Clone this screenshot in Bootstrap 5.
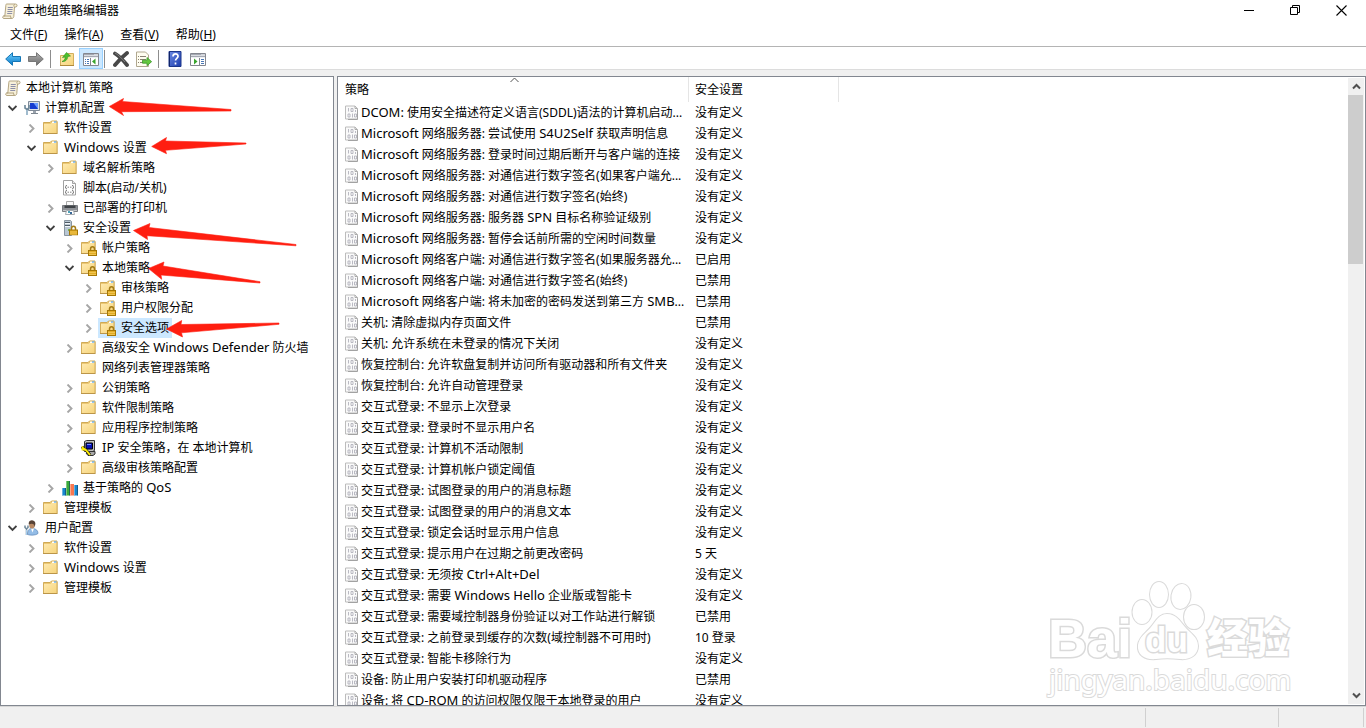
<!DOCTYPE html>
<html lang="zh-CN">
<head>
<meta charset="utf-8">
<meta name="viewport" content="width=device-width, initial-scale=1">
<title>本地组策略编辑器</title>
<link href="https://cdn.jsdelivr.net/npm/bootstrap@5.3.0/dist/css/bootstrap.min.css" rel="stylesheet">
<style>
  body { font: 12px/20px "Noto Sans", "Noto Sans CJK SC", sans-serif; color: #000; background: #f0f0f0; }
  button { font: inherit; color: inherit; border: 0; padding: 0; background: transparent; }
  a { color: inherit; text-decoration: none; }
  svg { display: block; flex: none; }
  .ico { width: 16px; height: 16px; }
  .en { font-size: 13px; line-height: 1; }
  .titlebar { height: 22px; padding-left: 2px; }
  .titlebar h1 { font-size: 12px; line-height: 22px; font-weight: 400; margin: 0 0 0 5px; }
  .wbtns { padding-right: 2px; }
  .wbtn { width: 46px; height: 20px; display: flex; align-items: center; justify-content: center; }
  .menubar { height: 24px; padding-left: 2px; }
  .menubar button { padding: 0 9px 0 8px; line-height: 26px; }
  .tools { height: 24px; padding-left: 1px; border-top: 1px solid #b4b4b4; border-bottom: 1px solid #dcdcdc; }
  .tool { width: 23px; height: 21px; display: flex; align-items: center; justify-content: center; }
  .tool.on { background: #cce8ff; border: 1px solid #99d1ff; width: 24px; margin: 0 -2px 0 1px; }
  .vsep { width: 1px; height: 18px; background: #8d8d8d; margin: 0 4px 1px 3px; }
  .panes { padding-top: 6px; gap: 3px; }
  .pane { border: 1px solid #828790; background: #fff; }
  .tree-pane { flex: 0 0 334px; padding: 1px 2px; }
  .tree-pane ul { list-style: none; margin: 0; padding: 0; }
  .tree-pane ul ul ul { padding-left: 19px; }
  .node { height: 20px; display: flex; align-items: center; white-space: nowrap; }
  .twist { width: 19px; height: 20px; display: flex; align-items: center; justify-content: center; flex: none; }
  .entry { height: 20px; display: flex; align-items: center; gap: 5px; padding: 0 3px 0 2px; }
  .picked { background: #cce8ff; }
  .marks { left: 0; top: 0; pointer-events: none; }
  .policies { table-layout: fixed; width: 501px; border-collapse: separate; border-spacing: 0; }
  .policies th { font-weight: 400; height: 25px; padding: 0 6px 0 7px; border-right: 1px solid #e5e5e5; position: relative; }
  .policies td { height: 21px; padding: 0 6px; line-height: 20px; white-space: nowrap; }
  .policies td:first-child { padding-left: 7px; }
  .policies th + th { padding-left: 6px; }
  .policies .ico { width: 14px; height: 16px; }
  .rowhead { display: flex; align-items: center; gap: 2px; height: 21px; }
  .sorted { position: absolute; left: 50%; top: 0; margin-left: -3px; }
  .vbar { width: 16px; margin: 1px 1px 1px 0; background: #f0f0f0; }
  .vbar button { height: 17px; display: flex; align-items: center; justify-content: center; }
  .thumb { height: 28.500%; width: 15px; background: #cdcdcd; }
  .status { height: 22px; border-top: 1px solid #d7d7d7; padding: 1px 2px 1px 0; }
  .status div { border-right: 1px solid #d0d0d0; }
  .stamp { right: 54px; bottom: 4px; pointer-events: none; }
</style>
</head>
<body class="vh-100 d-flex flex-column overflow-hidden">

<svg width="0" height="0" class="position-absolute" aria-hidden="true">
  <defs>
    <linearGradient id="gold" x1="0" y1="0" x2="1" y2="1"><stop offset="0" stop-color="#ffeab0"/><stop offset="1" stop-color="#f6d47c"/></linearGradient>
    <linearGradient id="sky" x1="0" y1="0" x2="0" y2="1"><stop offset="0" stop-color="#6fd0ff"/><stop offset="1" stop-color="#0878c8"/></linearGradient>
    <linearGradient id="iron" x1="0" y1="0" x2="0" y2="1"><stop offset="0" stop-color="#b0b0b0"/><stop offset="1" stop-color="#6c6c6c"/></linearGradient>
    <linearGradient id="navy" x1="0" y1="0" x2="1" y2="1"><stop offset="0" stop-color="#6d8ce6"/><stop offset="1" stop-color="#1c3cab"/></linearGradient>
  </defs>
  <symbol id="scroll" viewBox="0 0 16 16">
    <path d="M4.500 1h9c2 0 2 2.500.5 3h-1.500L11.800 13.500c-.2 1.300-1 2-2 2H2c-1.500 0-1.800-2-.5-2.500h1.300l1-10c0-1 .2-2 .7-2z" fill="#f7f0da" stroke="#ab9c76" stroke-width=".9"/>
    <path d="M12.500 4c-1-.4-1-2 .3-2.700M9.800 15.200C8 15 8.500 13 9 13H1.500" fill="none" stroke="#ab9c76" stroke-width=".9"/>
    <path d="M5.800 4.500h5M5.600 6.500h5M5.400 8.500h5M5.200 10.500h5" stroke="#8d8fa8"/>
  </symbol>
  <symbol id="folder" viewBox="0 0 16 16">
    <path d="M.5 13V2.500h6.500L8.500 1h5.500v12z" fill="#ecc873" stroke="#cfa955"/>
    <path d="M9 1.500h4.500v2H9z" fill="#fff"/><path d="M11 1.500h2.500v1H11z" fill="#2d8fe8"/>
    <path d="M1 4h6.500l1-1H14v10H1z" fill="url(#gold)"/>
    <path d="M.5 3v10.500M14 2v11.500" stroke="#d3ae5c"/><path d="M0 13.500h14.500" stroke="#bb9548"/>
  </symbol>
  <symbol id="padlock" viewBox="0 0 16 16">
    <path d="M9.500 10.500V9c0-3 4-3 4 0v1.500" fill="none" stroke="#a47c18" stroke-width="1.500"/>
    <rect x="7.500" y="10.500" width="8" height="5" fill="#e3ad26" stroke="#a67805"/>
    <path d="M8 12.500h7M8 14.500h7" stroke="#f9d56e" stroke-width=".6"/>
  </symbol>
  <symbol id="locked" viewBox="0 0 16 16"><use href="#folder" width="16" height="16"/><use href="#padlock" width="16" height="16"/></symbol>
  <symbol id="server" viewBox="0 0 16 16">
    <path d="M2.500.5h6l1 1v14h-7z" fill="#b9c7d3" stroke="#8995a0"/><path d="M3 2.500h5M3 5.500h5" stroke="#4c5963"/><path d="M3 3.500h5M3 6.500h5" stroke="#f3f7fa"/><path d="M6 9h2v2H6z" fill="#73b65c"/>
    <use href="#padlock" y="-.5" width="16" height="16"/>
  </symbol>
  <symbol id="pc" viewBox="0 0 16 16">
    <path d="M4.500 1.500h11v9h-11z" fill="#dce1e8" stroke="#808b98"/><path d="M6 3h8v6H6z" fill="#153bd0"/><path d="M9.500 3H14v6z" fill="#6a9cff"/>
    <path d="M9 11h3v2H9z" fill="#9aa3ad"/><path d="M7 13.500h7" stroke="#7d8790"/>
    <path d="M1 5v3l2 1.500L5 8V5M3 9v6" fill="none" stroke="#6d8799" stroke-width="1.600"/><path d="M3 10v5" stroke="#b7d9ef"/>
  </symbol>
  <symbol id="user" viewBox="0 0 16 16">
    <path d="M3.500 14.500c0-5 2-6 4.500-6s6 1 6 5c-2 2-8 2-10.500 1z" fill="#93bce6" stroke="#5c87b8" stroke-width=".7"/>
    <path d="M7 8.500l1.500 4 1.500-4z" fill="#fff"/><ellipse cx="8" cy="5" rx="2.800" ry="3.500" fill="#b98963"/>
    <path d="M4.800 4.500C4 .5 8-.5 10 1s1.500 4 .5 6c0-3-2-4-5.700-2.500z" fill="#584336"/>
    <path d="M1 5.500v2l1.500 1.500L4 7.500v-2M2.500 9v6" fill="none" stroke="#70899a" stroke-width="1.500"/><path d="M2.500 10v5" stroke="#a7cdec"/>
  </symbol>
  <symbol id="script" viewBox="0 0 16 16">
    <path d="M1.500.5h9l3 3v11.500h-12z" fill="#fff" stroke="#a2a2a2"/><path d="M10.500.5v3h3" fill="#e6e6e6" stroke="#a2a2a2"/>
    <path d="M5 5.500H4v1l-1 .7 1 .6v1h1m5-3.300h1v1l1 .7-1 .6v1h-1M5.500 7.200h1.500m1 0h1.500M5 10.500H4v1l-1 .7 1 .6v1h1m5-3.300h1v1l1 .7-1 .6v1h-1M5.500 12.200h1.500m1 0h1.500" fill="none" stroke="#777" stroke-width=".9"/>
  </symbol>
  <symbol id="printer" viewBox="0 0 16 16">
    <path d="M4.500 1.500h7v5h-7z" fill="#f9f9f9" stroke="#a9a9a9"/><path d="M.5 5.500h15V11.500H.5z" fill="#8d9095" stroke="#7b7e82"/>
    <path d="M2.500 5.500h11V8h-11z" fill="#3f4347"/><path d="M1 10.500h14" stroke="#c6c8ca"/>
    <path d="M4.500 10.500h7l1 4h-9z" fill="#fff" stroke="#a5abb1"/><path d="M6 11h2v2H6z" fill="#4ca2b9"/><path d="M8 12h2v2H8z" fill="#366796"/>
  </symbol>
  <symbol id="ipsec" viewBox="0 0 16 16">
    <path d="M3.500 1.500l2-1h8v10l-2 1h-8z" fill="#c0c0c0" stroke="#333"/><path d="M5 3h6.500v6H5z" fill="#0610b4" stroke="#000"/><path d="M6 4.500h4" stroke="#6e8aff"/>
    <path d="M5 13l2-1.500h7V14l-2 1.500H7z" fill="#aaa" stroke="#333"/>
    <path d="M1 6.500l2 3 2 .5 4 5" fill="none" stroke="#222" stroke-width="3"/><path d="M1 6.500l2 3 2 .5 4 5M.5 9.500l4-.5" fill="none" stroke="#ffee00" stroke-width="1.900"/>
  </symbol>
  <symbol id="bars" viewBox="0 0 16 16">
    <path d="M0 8h4v7.500H0z" fill="#1687cf"/><path d="M4 1h4v14.500H4z" fill="#39aa3a"/><path d="M8 4h4v11.500H8z" fill="#f87850"/><path d="M12 5h4v10.500h-4z" fill="#1687cf"/>
    <path d="M.5 8v7M4.500 1v14M8.500 4v11M12.500 5v10" stroke="#fff" opacity=".35"/><path d="M3.500 8v7.500M7.500 1v14.500M15.500 5v10.500" stroke="#113f61" opacity=".6"/>
  </symbol>
  <symbol id="rule" viewBox="0 0 14 16">
    <path d="M.5 1h9.500l2.500 2.500V14H.5z" fill="#fafafa" stroke="#bcbcbc"/><path d="M12.500 4.500v10H3" fill="none" stroke="#a2a2a2"/>
    <path d="M3.500 3v3.500M6 3.500h2v3H6zM10.500 5v2M3 9h2v3H3zM7.500 8.500v4M9.500 9h2v3h-2z" fill="none" stroke="#b2b2bc" stroke-width=".9"/><path d="M10 1v2.500h2.500" fill="none" stroke="#aaa"/>
  </symbol>
  <symbol id="shut" viewBox="0 0 9 9"><path d="M2.500.5l4 4-4 4" fill="none" stroke="#a6a6a6" stroke-width="1.900"/></symbol>
  <symbol id="open" viewBox="0 0 9 9"><path d="M.5 2l4 4 4-4" fill="none" stroke="#404040" stroke-width="1.900"/></symbol>
  <symbol id="arrow" viewBox="0 0 16 16"><path d="M.7 8L7.500 1.700v3.800h8v5h-8v3.800z"/></symbol>
  <symbol id="console" viewBox="0 0 16 16">
    <path d="M.5 2.500h15v12H.5z" fill="#fff" stroke="#84878f"/><path d="M1 3h14v3H1z" fill="#a4a8b2"/><path d="M1 4.500h14M1 6.500h14" stroke="#e9ebef" stroke-width=".8"/><path d="M11.500 3.500h1M13.500 3.500h1" stroke="#fff"/>
  </symbol>
</svg>

<header class="bg-white">
  <div class="titlebar d-flex align-items-center">
    <svg class="ico"><use href="#scroll"/></svg>
    <h1>本地组策略编辑器</h1>
    <div class="wbtns ms-auto d-flex align-self-start">
      <button class="wbtn" aria-label="最小化"><svg width="11" height="11"><path d="M0 5.500h10" stroke="#000"/></svg></button>
      <button class="wbtn" aria-label="向下还原"><svg width="11" height="11" fill="none" stroke="#000"><path d="M.5 2.500h7v7h-7zM2.500 2.500v-2h7v7h-2"/></svg></button>
      <button class="wbtn" aria-label="关闭"><svg width="11" height="11"><path d="M.5.5l10 10M10.500.5l-10 10" stroke="#000" stroke-width="1.100"/></svg></button>
    </div>
  </div>
  <nav class="menubar d-flex">
    <button>文件(<u>F</u>)</button><button>操作(<u>A</u>)</button><button>查看(<u>V</u>)</button><button>帮助(<u>H</u>)</button>
  </nav>
  <div class="tools d-flex align-items-end">
    <button class="tool" aria-label="后退"><svg class="ico" fill="url(#sky)" stroke="#1676b5"><use href="#arrow"/></svg></button>
    <button class="tool" aria-label="前进"><svg class="ico" fill="url(#iron)" stroke="#777"><use href="#arrow" transform="matrix(-1 0 0 1 16 0)"/></svg></button>
    <span class="vsep"></span>
    <button class="tool" aria-label="向上"><svg class="ico" viewBox="0 0 16 16"><path d="M1.500 4.500h6l1.500-2h5.500v12h-13z" fill="url(#gold)" stroke="#d3ae5c"/><path d="M1 14.500h14" stroke="#b08a3c"/><path d="M3 10.500c2-.8 3-2 3.300-4.500L3.500 6.500 7.500 1.500 11.500 5 8.800 5.500C8.500 9 6 11 3 10.500z" fill="#4cc02c" stroke="#2e8f1b" stroke-width=".6"/></svg></button>
    <button class="tool on" aria-label="显示控制台树"><svg class="ico" viewBox="0 0 16 16"><use href="#console"/><path d="M7.500 7v7" stroke="#84878f"/><path d="M2 8.500h1M2 10.500h1M2 12.500h1M4 8.500h2M4 10.500h2M4 12.500h2" stroke="#4b78b5"/><path d="M12.500 7.500v6l-3.500-3z" fill="#38a52d"/></svg></button>
    <span class="vsep"></span>
    <button class="tool" aria-label="删除"><svg class="ico" viewBox="0 0 16 16"><path d="M2 2.500C6 5 10 9 14 14M14 2C9 6 6 9 2 14" fill="none" stroke="#484848" stroke-width="3.800" stroke-linecap="round"/><path d="M2 2c4 2 7 6 10 9" fill="none" stroke="#8b8b8b" stroke-width=".8"/></svg></button>
    <button class="tool" aria-label="导出列表"><svg class="ico" viewBox="0 0 16 16"><path d="M.5 1h9l3 3v11.500H.5z" fill="#fffdf0" stroke="#b0a78f"/><path d="M2 5.500h1M2 8.500h1M2 11.500h1M4 5.500h6M4 8.500h6M4 11.500h5" stroke="#8a8174"/><path d="M6.500 9.200H11V6.500l4.600 4.200-4.600 4v-2.500H6.500z" fill="#64c83f" stroke="#3b962a" stroke-width=".8"/></svg></button>
    <span class="vsep"></span>
    <button class="tool" aria-label="帮助"><svg class="ico" viewBox="0 0 16 16"><path d="M2 .5h12v15H2z" fill="url(#navy)" stroke="#1c368a"/><path d="M2.500 1v14" stroke="#102469"/><path d="M6 5.500c0-3.500 5.500-3.500 5 0-.2 1.800-2.500 2-2.500 4M8.500 11.500v2" fill="none" stroke="#fff" stroke-width="1.700"/></svg></button>
    <button class="tool" aria-label="操作窗格"><svg class="ico" viewBox="0 0 16 16"><use href="#console"/><path d="M9.500 7v7" stroke="#84878f"/><path d="M11 8.500h3M11 10.500h3M11 12.500h3" stroke="#4b78b5"/><path d="M4 7.500v6l3.500-3z" fill="#38a52d"/></svg></button>
  </div>
</header>

<main class="panes d-flex flex-fill overflow-hidden">
  <nav class="pane tree-pane position-relative overflow-hidden">
    <ul>
      <li><div class="node"><a class="entry" href="#"><svg class="ico"><use href="#scroll"/></svg><span>本地计算机 策略</span></a></div>
        <ul>
          <li><div class="node"><button class="twist" aria-label="折叠"><svg width="9" height="9"><use href="#open"/></svg></button><a class="entry" href="#"><svg class="ico"><use href="#pc"/></svg><span>计算机配置</span></a></div>
            <ul>
              <li><div class="node"><button class="twist" aria-label="展开"><svg width="9" height="9"><use href="#shut"/></svg></button><a class="entry" href="#"><svg class="ico"><use href="#folder"/></svg><span>软件设置</span></a></div></li>
              <li><div class="node"><button class="twist" aria-label="折叠"><svg width="9" height="9"><use href="#open"/></svg></button><a class="entry" href="#"><svg class="ico"><use href="#folder"/></svg><span><span class="en">Windows</span> 设置</span></a></div>
                <ul>
                  <li><div class="node"><button class="twist" aria-label="展开"><svg width="9" height="9"><use href="#shut"/></svg></button><a class="entry" href="#"><svg class="ico"><use href="#folder"/></svg><span>域名解析策略</span></a></div></li>
                  <li><div class="node"><i class="twist"></i><a class="entry" href="#"><svg class="ico"><use href="#script"/></svg><span>脚本(启动/关机)</span></a></div></li>
                  <li><div class="node"><button class="twist" aria-label="展开"><svg width="9" height="9"><use href="#shut"/></svg></button><a class="entry" href="#"><svg class="ico"><use href="#printer"/></svg><span>已部署的打印机</span></a></div></li>
                  <li><div class="node"><button class="twist" aria-label="折叠"><svg width="9" height="9"><use href="#open"/></svg></button><a class="entry" href="#"><svg class="ico"><use href="#server"/></svg><span>安全设置</span></a></div>
                    <ul>
                      <li><div class="node"><button class="twist" aria-label="展开"><svg width="9" height="9"><use href="#shut"/></svg></button><a class="entry" href="#"><svg class="ico"><use href="#locked"/></svg><span>帐户策略</span></a></div></li>
                      <li><div class="node"><button class="twist" aria-label="折叠"><svg width="9" height="9"><use href="#open"/></svg></button><a class="entry" href="#"><svg class="ico"><use href="#locked"/></svg><span>本地策略</span></a></div>
                        <ul>
                          <li><div class="node"><button class="twist" aria-label="展开"><svg width="9" height="9"><use href="#shut"/></svg></button><a class="entry" href="#"><svg class="ico"><use href="#locked"/></svg><span>审核策略</span></a></div></li>
                          <li><div class="node"><button class="twist" aria-label="展开"><svg width="9" height="9"><use href="#shut"/></svg></button><a class="entry" href="#"><svg class="ico"><use href="#locked"/></svg><span>用户权限分配</span></a></div></li>
                          <li><div class="node"><button class="twist" aria-label="展开"><svg width="9" height="9"><use href="#shut"/></svg></button><a class="entry picked" href="#"><svg class="ico"><use href="#locked"/></svg><span>安全选项</span></a></div></li>
                        </ul>
                      </li>
                      <li><div class="node"><button class="twist" aria-label="展开"><svg width="9" height="9"><use href="#shut"/></svg></button><a class="entry" href="#"><svg class="ico"><use href="#folder"/></svg><span>高级安全 <span class="en">Windows Defender</span> 防火墙</span></a></div></li>
                      <li><div class="node"><i class="twist"></i><a class="entry" href="#"><svg class="ico"><use href="#folder"/></svg><span>网络列表管理器策略</span></a></div></li>
                      <li><div class="node"><button class="twist" aria-label="展开"><svg width="9" height="9"><use href="#shut"/></svg></button><a class="entry" href="#"><svg class="ico"><use href="#folder"/></svg><span>公钥策略</span></a></div></li>
                      <li><div class="node"><button class="twist" aria-label="展开"><svg width="9" height="9"><use href="#shut"/></svg></button><a class="entry" href="#"><svg class="ico"><use href="#folder"/></svg><span>软件限制策略</span></a></div></li>
                      <li><div class="node"><button class="twist" aria-label="展开"><svg width="9" height="9"><use href="#shut"/></svg></button><a class="entry" href="#"><svg class="ico"><use href="#folder"/></svg><span>应用程序控制策略</span></a></div></li>
                      <li><div class="node"><button class="twist" aria-label="展开"><svg width="9" height="9"><use href="#shut"/></svg></button><a class="entry" href="#"><svg class="ico"><use href="#ipsec"/></svg><span><span class="en">IP</span> 安全策略，在 本地计算机</span></a></div></li>
                      <li><div class="node"><button class="twist" aria-label="展开"><svg width="9" height="9"><use href="#shut"/></svg></button><a class="entry" href="#"><svg class="ico"><use href="#folder"/></svg><span>高级审核策略配置</span></a></div></li>
                    </ul>
                  </li>
                  <li><div class="node"><button class="twist" aria-label="展开"><svg width="9" height="9"><use href="#shut"/></svg></button><a class="entry" href="#"><svg class="ico"><use href="#bars"/></svg><span>基于策略的 <span class="en">QoS</span></span></a></div></li>
                </ul>
              </li>
              <li><div class="node"><button class="twist" aria-label="展开"><svg width="9" height="9"><use href="#shut"/></svg></button><a class="entry" href="#"><svg class="ico"><use href="#folder"/></svg><span>管理模板</span></a></div></li>
            </ul>
          </li>
          <li><div class="node"><button class="twist" aria-label="折叠"><svg width="9" height="9"><use href="#open"/></svg></button><a class="entry" href="#"><svg class="ico"><use href="#user"/></svg><span>用户配置</span></a></div>
            <ul>
              <li><div class="node"><button class="twist" aria-label="展开"><svg width="9" height="9"><use href="#shut"/></svg></button><a class="entry" href="#"><svg class="ico"><use href="#folder"/></svg><span>软件设置</span></a></div></li>
              <li><div class="node"><button class="twist" aria-label="展开"><svg width="9" height="9"><use href="#shut"/></svg></button><a class="entry" href="#"><svg class="ico"><use href="#folder"/></svg><span><span class="en">Windows</span> 设置</span></a></div></li>
              <li><div class="node"><button class="twist" aria-label="展开"><svg width="9" height="9"><use href="#shut"/></svg></button><a class="entry" href="#"><svg class="ico"><use href="#folder"/></svg><span>管理模板</span></a></div></li>
            </ul>
          </li>
        </ul>
      </li>
    </ul>
    <!-- red pointers along the path to 安全选项 -->
    <svg class="marks position-absolute" width="320" height="280" viewBox="1 77 320 280" fill="#ff1e10" stroke="#ff1e10" stroke-width=".6" stroke-linejoin="round" aria-hidden="true">
      <path d="M109.300 106.500L123.500 98.500 122.500 101.500 231 109.500V111L121.500 111.700 123.500 115.500z"/>
      <path d="M151.700 146.500L166.500 137.500 165.500 141 246 143V144L165.500 150.300 166.500 153.700z"/>
      <path d="M133.500 230.500L150 223.500 149 227.500 296 244.500V245.800L147 235.700 147.500 239.500z"/>
      <path d="M148.500 268.500L164 262 163 266 260 281.700V283L161 275 161.700 279.300z"/>
      <path d="M166.500 329L181.700 320.500 181 324.500 279 323V324.300L181.500 332.800 182.500 337z"/>
    </svg>
  </nav>

  <section class="pane flex-fill d-flex overflow-hidden position-relative">
    <div class="flex-fill overflow-hidden">
      <table class="policies">
        <colgroup><col style="width:351px"><col></colgroup>
        <thead><tr><th scope="col">策略<svg class="sorted" width="9" height="6"><path d="M.5 5l4-4 4 4" fill="none" stroke="#555"/></svg></th><th scope="col">安全设置</th></tr></thead>
        <tbody>
          <tr><td><div class="rowhead"><svg class="ico"><use href="#rule"/></svg><span><span class="en">DCOM:</span> 使用安全描述符定义语言(SDDL)语法的计算机启动...</span></div></td><td>没有定义</td></tr>
          <tr><td><div class="rowhead"><svg class="ico"><use href="#rule"/></svg><span><span class="en">Microsoft</span> 网络服务器: 尝试使用 <span class="en">S4U2Self</span> 获取声明信息</span></div></td><td>没有定义</td></tr>
          <tr><td><div class="rowhead"><svg class="ico"><use href="#rule"/></svg><span><span class="en">Microsoft</span> 网络服务器: 登录时间过期后断开与客户端的连接</span></div></td><td>没有定义</td></tr>
          <tr><td><div class="rowhead"><svg class="ico"><use href="#rule"/></svg><span><span class="en">Microsoft</span> 网络服务器: 对通信进行数字签名(如果客户端允...</span></div></td><td>没有定义</td></tr>
          <tr><td><div class="rowhead"><svg class="ico"><use href="#rule"/></svg><span><span class="en">Microsoft</span> 网络服务器: 对通信进行数字签名(始终)</span></div></td><td>没有定义</td></tr>
          <tr><td><div class="rowhead"><svg class="ico"><use href="#rule"/></svg><span><span class="en">Microsoft</span> 网络服务器: 服务器 <span class="en">SPN</span> 目标名称验证级别</span></div></td><td>没有定义</td></tr>
          <tr><td><div class="rowhead"><svg class="ico"><use href="#rule"/></svg><span><span class="en">Microsoft</span> 网络服务器: 暂停会话前所需的空闲时间数量</span></div></td><td>没有定义</td></tr>
          <tr><td><div class="rowhead"><svg class="ico"><use href="#rule"/></svg><span><span class="en">Microsoft</span> 网络客户端: 对通信进行数字签名(如果服务器允...</span></div></td><td>已启用</td></tr>
          <tr><td><div class="rowhead"><svg class="ico"><use href="#rule"/></svg><span><span class="en">Microsoft</span> 网络客户端: 对通信进行数字签名(始终)</span></div></td><td>已禁用</td></tr>
          <tr><td><div class="rowhead"><svg class="ico"><use href="#rule"/></svg><span><span class="en">Microsoft</span> 网络客户端: 将未加密的密码发送到第三方 <span class="en">SMB</span>...</span></div></td><td>已禁用</td></tr>
          <tr><td><div class="rowhead"><svg class="ico"><use href="#rule"/></svg><span>关机: 清除虚拟内存页面文件</span></div></td><td>已禁用</td></tr>
          <tr><td><div class="rowhead"><svg class="ico"><use href="#rule"/></svg><span>关机: 允许系统在未登录的情况下关闭</span></div></td><td>没有定义</td></tr>
          <tr><td><div class="rowhead"><svg class="ico"><use href="#rule"/></svg><span>恢复控制台: 允许软盘复制并访问所有驱动器和所有文件夹</span></div></td><td>没有定义</td></tr>
          <tr><td><div class="rowhead"><svg class="ico"><use href="#rule"/></svg><span>恢复控制台: 允许自动管理登录</span></div></td><td>没有定义</td></tr>
          <tr><td><div class="rowhead"><svg class="ico"><use href="#rule"/></svg><span>交互式登录: 不显示上次登录</span></div></td><td>没有定义</td></tr>
          <tr><td><div class="rowhead"><svg class="ico"><use href="#rule"/></svg><span>交互式登录: 登录时不显示用户名</span></div></td><td>没有定义</td></tr>
          <tr><td><div class="rowhead"><svg class="ico"><use href="#rule"/></svg><span>交互式登录: 计算机不活动限制</span></div></td><td>没有定义</td></tr>
          <tr><td><div class="rowhead"><svg class="ico"><use href="#rule"/></svg><span>交互式登录: 计算机帐户锁定阈值</span></div></td><td>没有定义</td></tr>
          <tr><td><div class="rowhead"><svg class="ico"><use href="#rule"/></svg><span>交互式登录: 试图登录的用户的消息标题</span></div></td><td>没有定义</td></tr>
          <tr><td><div class="rowhead"><svg class="ico"><use href="#rule"/></svg><span>交互式登录: 试图登录的用户的消息文本</span></div></td><td>没有定义</td></tr>
          <tr><td><div class="rowhead"><svg class="ico"><use href="#rule"/></svg><span>交互式登录: 锁定会话时显示用户信息</span></div></td><td>没有定义</td></tr>
          <tr><td><div class="rowhead"><svg class="ico"><use href="#rule"/></svg><span>交互式登录: 提示用户在过期之前更改密码</span></div></td><td>5 天</td></tr>
          <tr><td><div class="rowhead"><svg class="ico"><use href="#rule"/></svg><span>交互式登录: 无须按 <span class="en">Ctrl+Alt+Del</span></span></div></td><td>没有定义</td></tr>
          <tr><td><div class="rowhead"><svg class="ico"><use href="#rule"/></svg><span>交互式登录: 需要 <span class="en">Windows Hello</span> 企业版或智能卡</span></div></td><td>没有定义</td></tr>
          <tr><td><div class="rowhead"><svg class="ico"><use href="#rule"/></svg><span>交互式登录: 需要域控制器身份验证以对工作站进行解锁</span></div></td><td>已禁用</td></tr>
          <tr><td><div class="rowhead"><svg class="ico"><use href="#rule"/></svg><span>交互式登录: 之前登录到缓存的次数(域控制器不可用时)</span></div></td><td>10 登录</td></tr>
          <tr><td><div class="rowhead"><svg class="ico"><use href="#rule"/></svg><span>交互式登录: 智能卡移除行为</span></div></td><td>没有定义</td></tr>
          <tr><td><div class="rowhead"><svg class="ico"><use href="#rule"/></svg><span>设备: 防止用户安装打印机驱动程序</span></div></td><td>已禁用</td></tr>
          <tr><td><div class="rowhead"><svg class="ico"><use href="#rule"/></svg><span>设备: 将 <span class="en">CD-ROM</span> 的访问权限仅限于本地登录的用户</span></div></td><td>没有定义</td></tr>
        </tbody>
      </table>
    </div>
    <div class="vbar d-flex flex-column">
      <button aria-label="向上滚动"><svg width="9" height="7"><path d="M1 5.500l3.500-3.500 3.500 3.500" fill="none" stroke="#505050" stroke-width="2"/></svg></button>
      <div class="flex-fill"><div class="h-100"><div class="thumb"></div></div></div>
      <button aria-label="向下滚动"><svg width="9" height="7"><path d="M1 1.500l3.500 3.500 3.500-3.500" fill="none" stroke="#505050" stroke-width="2"/></svg></button>
    </div>
    <svg class="stamp position-absolute" width="270" height="126" viewBox="1040 575 270 126" fill="#fff" stroke="#dadada" stroke-width="3" paint-order="stroke">
      <g stroke-width="2">
        <ellipse cx="1141" cy="612" rx="9.500" ry="12"/><ellipse cx="1158" cy="594.500" rx="9" ry="12.500"/><ellipse cx="1180" cy="596.500" rx="9.500" ry="12.500" transform="rotate(8 1180 596)"/><ellipse cx="1193" cy="617" rx="10" ry="12"/>
        <path d="M1166 614c9 0 13 7 18 13s13 10 13 19c0 9-8 14-18 13-9-1-17-1-24 0-11 1-19-4-18-14 1-8 8-12 13-18s8-13 16-13z"/>
      </g>
      <text x="1047" y="657" font-family="Liberation Sans" font-weight="700" font-size="54">Bai</text>
      <text x="1144" y="652" font-family="Liberation Sans" font-weight="700" font-size="35">du</text>
      <text x="1206" y="653" font-family="Noto Sans CJK SC" font-weight="900" font-size="41">经验</text>
      <text x="1048" y="690" font-family="Noto Sans" font-size="28" stroke-width="2">jingyan.baidu.com</text>
    </svg>
  </section>
</main>

<footer class="status d-flex">
  <div class="flex-fill"></div><div style="width:133px"></div><div style="width:85px"></div>
</footer>

<script src="https://cdn.jsdelivr.net/npm/bootstrap@5.3.0/dist/js/bootstrap.bundle.min.js"></script>
</body>
</html>
